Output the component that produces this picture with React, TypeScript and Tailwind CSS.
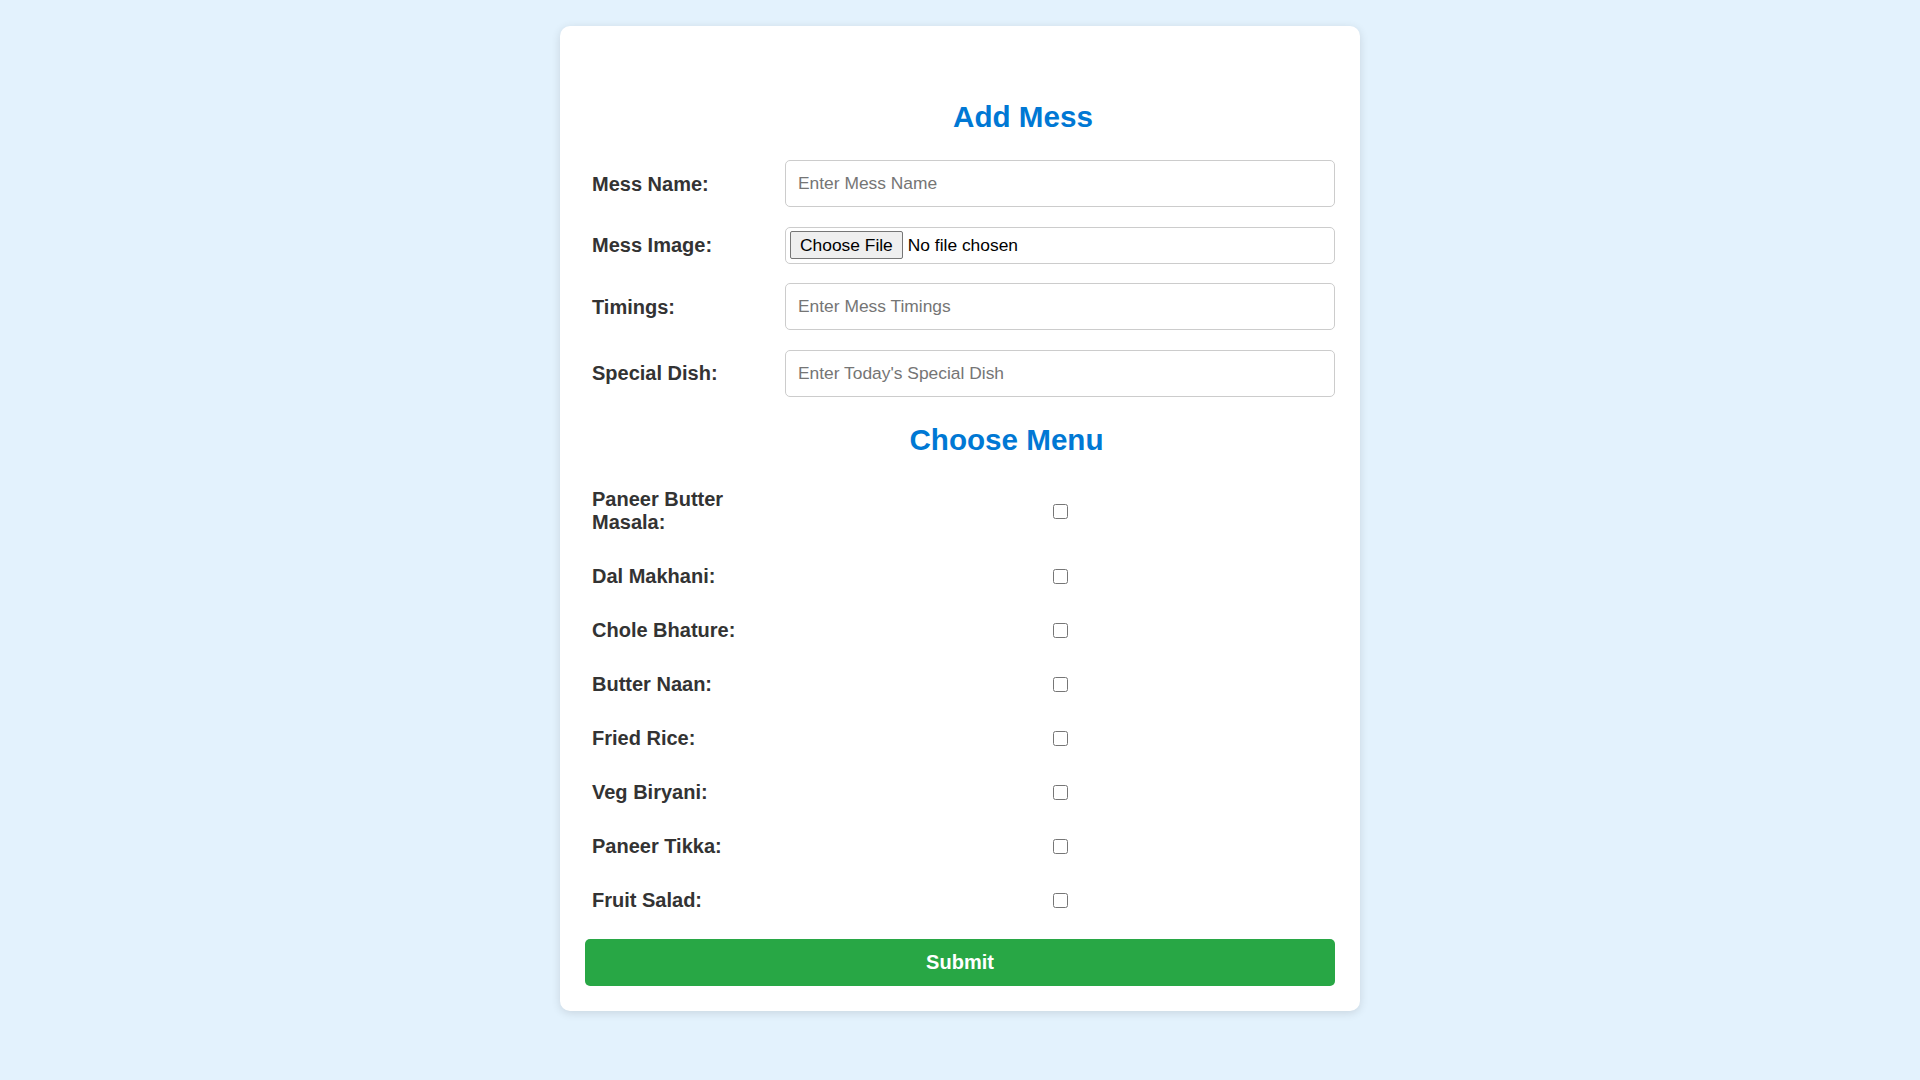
import { useState } from "react"

const dishes = [
  "Paneer Butter Masala",
  "Dal Makhani",
  "Chole Bhature",
  "Butter Naan",
  "Fried Rice",
  "Veg Biryani",
  "Paneer Tikka",
  "Fruit Salad",
]

function TextRow({ label, placeholder }: { label: string; placeholder: string }) {
  return (
    <div className="flex items-center">
      <label className="w-[200px] shrink-0 pl-[7px] text-[20px] font-bold text-[#333]">{label}</label>
      <input
        type="text"
        placeholder={placeholder}
        className="h-[47px] flex-1 rounded-[5px] border border-[#ccc] bg-white px-[12px] text-[17.4px] text-[#333] placeholder:text-[#757575] outline-none"
      />
    </div>
  )
}

export default function App() {
  const [menu, setMenu] = useState<Record<string, boolean>>({})

  return (
    <div className="min-h-screen bg-[#e3f2fd] pt-[26px] pb-[70px] font-['Liberation_Sans',Arial,sans-serif]">
      <form
        className="mx-auto w-[800px] rounded-[10px] bg-white px-[25px] pt-[75px] pb-[25px] shadow-[0_2px_10px_rgba(0,0,0,0.12)]"
        onSubmit={(e) => e.preventDefault()}
      >
        <h2 className="pl-[126px] text-center text-[29.6px] font-bold leading-[32px] text-[#0078d4]">Add Mess</h2>

        <div className="mt-[27px] flex flex-col gap-[19.5px]">
          <TextRow label="Mess Name:" placeholder="Enter Mess Name" />
          <div className="flex items-center">
            <label className="w-[200px] shrink-0 pl-[7px] text-[20px] font-bold text-[#333]">Mess Image:</label>
            <input
              type="file"
              className="h-[37px] flex-1 rounded-[5px] border border-[#ccc] px-[4px] py-[3px] text-[17.4px] text-black file:mr-[5px] file:h-[28px] file:rounded-[2px] file:border file:border-[#767676] file:bg-[#efefef] file:px-[9px] file:text-black"
            />
          </div>
          <TextRow label="Timings:" placeholder="Enter Mess Timings" />
          <TextRow label="Special Dish:" placeholder="Enter Today's Special Dish" />
        </div>

        <h2 className="mt-[27px] pl-[93px] text-center text-[29.6px] font-bold leading-[32px] text-[#0078d4]">
          Choose Menu
        </h2>

        <div className="mt-[32.5px] flex flex-col gap-[31px]">
          {dishes.map((d) => (
            <div key={d} className="flex items-center">
              <label className="w-[200px] shrink-0 pl-[7px] text-[20px] font-bold leading-[23px] text-[#333]">
                {d}:
              </label>
              <div className="flex flex-1 justify-center">
                <input
                  type="checkbox"
                  checked={!!menu[d]}
                  onChange={(e) => setMenu((prev) => ({ ...prev, [d]: e.target.checked }))}
                  className="m-0 h-[15px] w-[15px]"
                />
              </div>
            </div>
          ))}
        </div>

        <button
          type="submit"
          className="mt-[26.5px] h-[47px] w-full rounded-[5px] bg-[#28a745] text-[20px] font-bold text-white"
        >
          Submit
        </button>
      </form>
    </div>
  )
}
